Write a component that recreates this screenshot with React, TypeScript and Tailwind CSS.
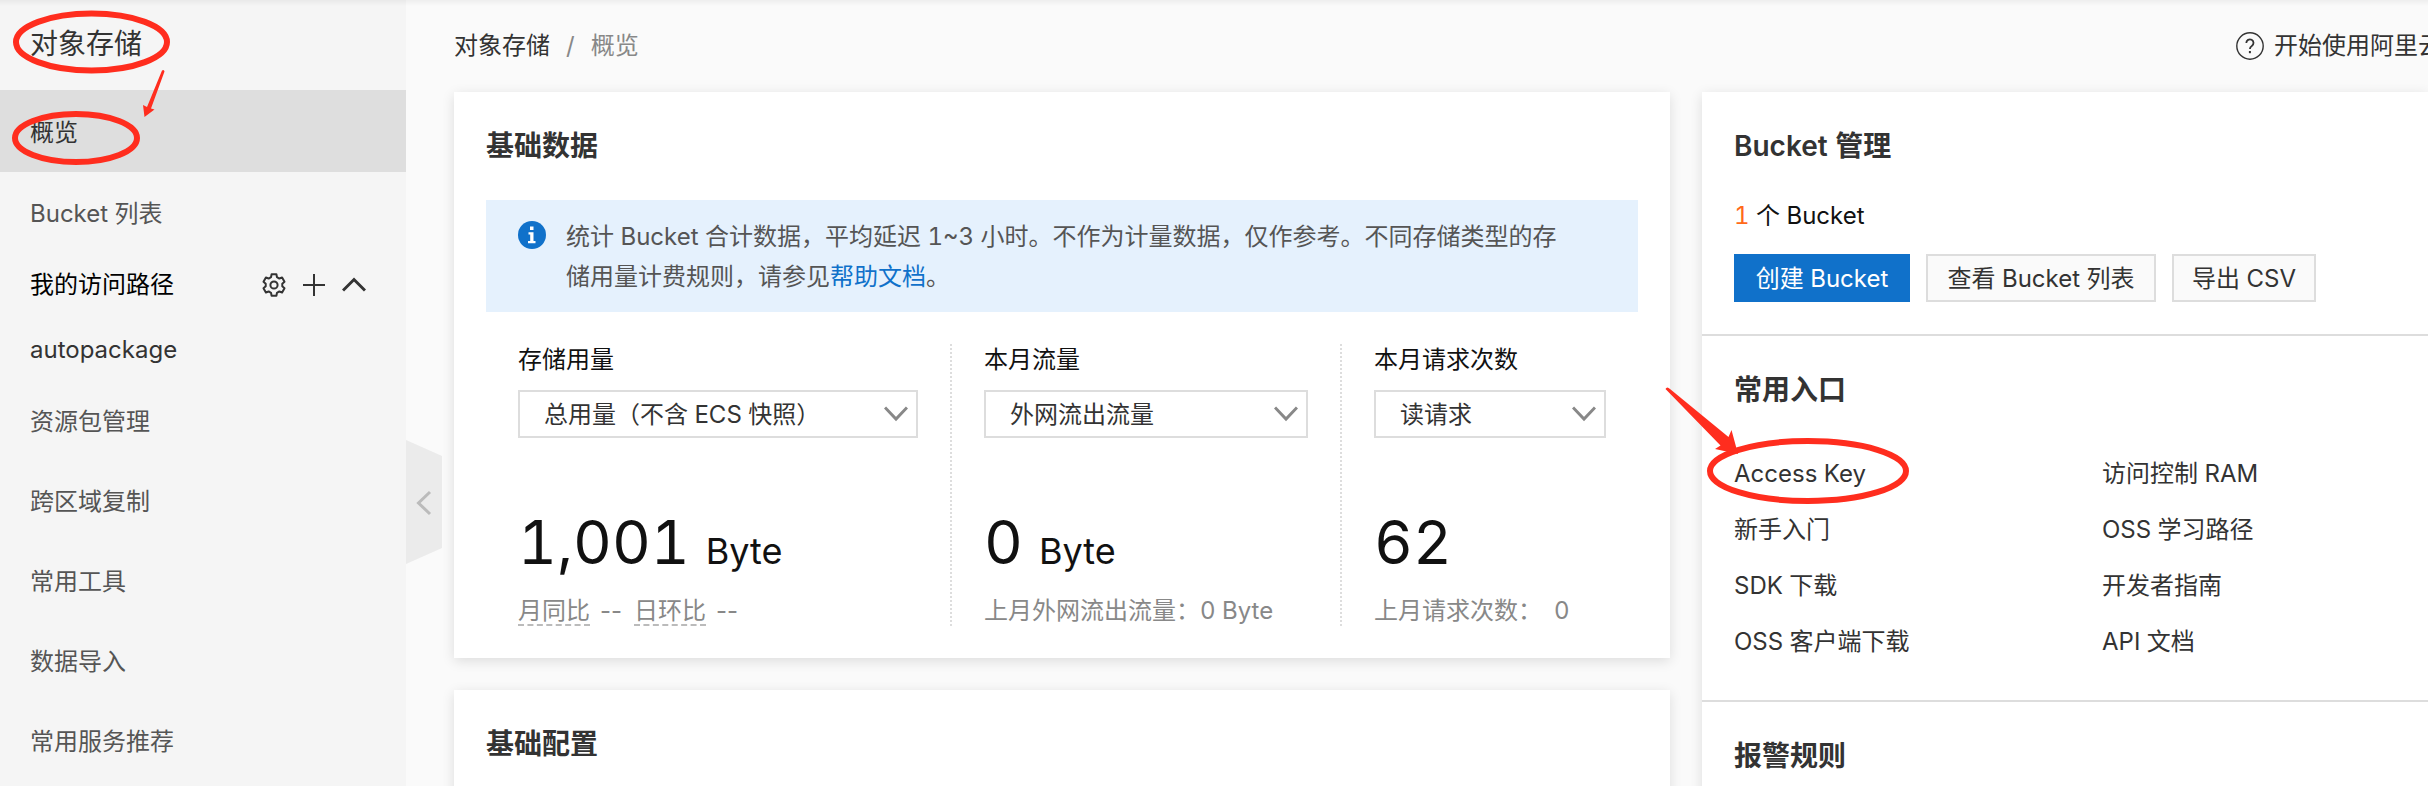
import { useState } from "react";
import type { ReactNode } from "react";

const RED = "#ff2d1e";

function GearIcon() {
  const points: string[] = [];
  const teeth = 6;
  for (let i = 0; i < teeth; i++) {
    const base = (i * 2 * Math.PI) / teeth - Math.PI / 2;
    const corners: [number, number][] = [
      [-0.36, 8.4],
      [-0.22, 11],
      [0.22, 11],
      [0.36, 8.4],
    ];
    corners.forEach(([a, r]) => {
      points.push(`${(12 + r * Math.cos(base + a)).toFixed(2)},${(12 + r * Math.sin(base + a)).toFixed(2)}`);
    });
  }
  return (
    <svg viewBox="0 0 24 24" className="size-6" fill="none" stroke="#333" strokeWidth="2" strokeLinejoin="round">
      <polygon points={points.join(" ")} />
      <circle cx="12" cy="12" r="3.6" />
    </svg>
  );
}

function PlusIcon() {
  return (
    <svg viewBox="0 0 24 24" className="size-6" fill="none" stroke="#333" strokeWidth="2">
      <path d="M12 1v22M1 12h22" />
    </svg>
  );
}

function UpIcon() {
  return (
    <svg viewBox="0 0 24 24" className="size-6" fill="none" stroke="#333" strokeWidth="3">
      <path d="M1 17.5 12 6.500 23 17.500" />
    </svg>
  );
}

function DownIcon() {
  return (
    <svg
      viewBox="0 0 24 16"
      className="pointer-events-none absolute top-4 right-2.5 h-4 w-6"
      fill="none"
      stroke="#888"
      strokeWidth="3"
    >
      <path d="M1 1.500 12 13 23 1.500" />
    </svg>
  );
}

function InfoIcon() {
  return (
    <svg viewBox="0 0 28 28" className="mt-1 size-7 shrink-0">
      <circle cx="14" cy="14" r="14" fill="#1071ca" />
      <path d="M12 5.500h3.500v3.500h-3.500zM10.500 11.200h5v8.800h2v2.300h-7.500v-2.300h2.200v-6.500h-1.700z" fill="#fff" />
    </svg>
  );
}

function HelpIcon() {
  return (
    <svg viewBox="0 0 28 28" className="size-7 shrink-0" fill="none" stroke="#333" strokeWidth="1.4">
      <circle cx="14" cy="14" r="13.200" />
      <path d="M10.300 11a3.600 3.600 0 1 1 5.500 3c-1.300.8-1.900 1.500-1.900 3.100" strokeWidth="1.8" />
      <path d="M13.900 19v2.200" strokeWidth="2" />
    </svg>
  );
}

function SideItem({ label }: { label: string }) {
  return (
    <a href="#" className="flex h-20 items-center px-[30px] text-[#555]">
      {label}
    </a>
  );
}

function Card({ children, className = "" }: { children: ReactNode; className?: string }) {
  return <section className={`bg-white shadow-[0_3px_12px_rgba(0,0,0,0.12)] ${className}`}>{children}</section>;
}

function Title({ children }: { children: ReactNode }) {
  return <h2 className="pt-0.5 text-[28px] leading-10 font-semibold text-[#333]">{children}</h2>;
}

function Metric({
  id,
  label,
  option,
  value,
  unit,
  children,
}: {
  id: string;
  label: string;
  option: string;
  value: string;
  unit?: string;
  children: ReactNode;
}) {
  return (
    <div className="min-w-0 border-r-2 border-dotted border-[#ddd] px-8 last:border-r-0">
      <label htmlFor={id} className="block leading-8 text-[#111]">
        {label}
      </label>
      <div className="relative mt-3.5">
        <select
          id={id}
          className="block h-12 w-full appearance-none rounded-none border-2 border-[#ddd] bg-white pt-0.5 pr-10 pl-6 text-[#333]"
        >
          <option>{option}</option>
        </select>
        <DownIcon />
      </div>
      <p className="mt-[68px] text-[60px] leading-[72px] whitespace-nowrap text-[#111]">
        {value}
        {unit && <span className="ml-4 text-4xl">{unit}</span>}
      </p>
      <div className="mt-[18px] flex h-[30px] leading-[30px] whitespace-nowrap text-[#888]">{children}</div>
    </div>
  );
}

const links = [
  "Access Key",
  "访问控制 RAM",
  "新手入门",
  "OSS 学习路径",
  "SDK 下载",
  "开发者指南",
  "OSS 客户端下载",
  "API 文档",
];

export default function App() {
  const [open, setOpen] = useState(true);
  return (
    <div className="relative flex h-screen overflow-hidden bg-[#fafafa] font-['Inter','Noto_Sans_CJK_SC',sans-serif] text-2xl text-[#333] tabular-nums">
      <aside className="relative w-[406px] shrink-0 bg-[#f5f5f5]">
        <h1 className="flex h-[90px] items-center px-[30px] text-[28px]">对象存储</h1>
        <nav>
          <a href="#" aria-current="page" className="flex h-[82px] items-center bg-[#dedede] px-[30px] pt-1 text-[#333]">
            概览
          </a>
          <a href="#" className="flex h-20 items-center px-[30px] pt-1 text-[#555]">
            Bucket 列表
          </a>
          <div className="flex h-[66px] items-center pr-10 pl-[30px]">
            <span className="flex-1 text-black">我的访问路径</span>
            <div className="flex gap-4">
              <button aria-label="设置">
                <GearIcon />
              </button>
              <button aria-label="添加">
                <PlusIcon />
              </button>
              <button aria-label="收起" onClick={() => setOpen(!open)}>
                <UpIcon />
              </button>
            </div>
          </div>
          {open && (
            <a href="#" className="flex h-16 items-center px-[30px]">
              autopackage
            </a>
          )}
          <SideItem label="资源包管理" />
          <SideItem label="跨区域复制" />
          <SideItem label="常用工具" />
          <SideItem label="数据导入" />
          <SideItem label="常用服务推荐" />
        </nav>
        <button aria-label="折叠菜单" className="absolute top-[440px] left-full h-[124px] w-9">
          <svg viewBox="0 0 36 124" className="h-full w-full" fill="none">
            <path d="M0 0 36 16V108L0 124Z" fill="#ebebeb" />
            <path d="M24 52 12.500 63 24 74" stroke="#bbb" strokeWidth="3" />
          </svg>
        </button>
        <svg viewBox="0 0 200 180" className="pointer-events-none absolute top-0 left-0 h-[180px] w-[200px]" fill="none">
          <ellipse cx="91.500" cy="42" rx="75.500" ry="28.500" stroke={RED} strokeWidth="6" />
          <ellipse cx="76" cy="138" rx="61" ry="24" stroke={RED} strokeWidth="6" />
          <path d="M162 70.500Q164 69 164.500 71.500L151 108.500 154.500 109.500 144.500 117 143 105 147 107Z" fill={RED} />
        </svg>
      </aside>

      <main className="min-w-0 flex-1 pl-12">
        <header className="flex h-[92px] items-center justify-between">
          <nav className="flex gap-4">
            <a href="#">对象存储</a>
            <span className="text-[#888]">/</span>
            <span className="text-[#888]">概览</span>
          </nav>
          <a href="#" className="flex w-48 items-center gap-2.5 overflow-hidden whitespace-nowrap">
            <HelpIcon />
            开始使用阿里云 OSS
          </a>
        </header>

        <div className="grid grid-cols-[1216fr_726fr] gap-x-8">
          <div className="flex min-w-0 flex-col gap-8">
            <Card className="px-8 pt-8 pb-8">
              <Title>基础数据</Title>
              <div className="mt-[34px] flex gap-5 bg-[#e5f1fd] pt-[17px] pr-17 pb-[15px] pl-8">
                <InfoIcon />
                <p className="leading-10 text-[#555]">
                  统计 Bucket 合计数据，平均延迟 1~3 小时。不作为计量数据，仅作参考。不同存储类型的存储用量计费规则，请参见
                  <a href="#" className="text-[#1071ca]">
                    帮助文档
                  </a>
                  。
                </p>
              </div>
              <div className="mt-8 grid grid-cols-[466fr_390fr_296fr]">
                <Metric id="storage" label="存储用量" option="总用量（不含 ECS 快照）" value="1,001" unit="Byte">
                  <span className="border-b-2 border-dashed border-[#bbb]">月同比</span>
                  <span className="mr-3 ml-2.5 normal-nums">--</span>
                  <span className="border-b-2 border-dashed border-[#bbb]">日环比</span>
                  <span className="ml-2.5 normal-nums">--</span>
                </Metric>
                <Metric id="traffic" label="本月流量" option="外网流出流量" value="0" unit="Byte">
                  上月外网流出流量：0 Byte
                </Metric>
                <Metric id="requests" label="本月请求次数" option="读请求" value="62">
                  上月请求次数：<span className="ml-3">0</span>
                </Metric>
              </div>
            </Card>
            <Card className="h-80 px-8 pt-8">
              <Title>基础配置</Title>
            </Card>
          </div>

          <Card className="min-w-0">
            <div className="border-b-2 border-[#ddd] px-8 pt-8 pb-8">
              <Title>Bucket 管理</Title>
              <p className="mt-8 leading-9 text-[#111]">
                <span className="text-[#ff6a19]">1</span> 个 Bucket
              </p>
              <div className="mt-5 flex gap-4 whitespace-nowrap">
                <button className="h-12 w-44 bg-[#1071ca] pt-0.5 text-white">创建 Bucket</button>
                <button className="h-12 w-[230px] border-2 border-[#ddd] bg-[#fafafa] pt-0.5">查看 Bucket 列表</button>
                <button className="h-12 w-36 border-2 border-[#ddd] bg-[#fafafa] pt-0.5">导出 CSV</button>
              </div>
            </div>
            <div className="border-b-2 border-[#ddd] pt-8 pb-[30px] pl-8">
              <Title>常用入口</Title>
              <ul className="mt-9 grid grid-cols-[368fr_326fr]">
                {links.map((text, i) => (
                  <li key={text} className="relative flex h-14 items-center">
                    <a href="#">{text}</a>
                    {i === 0 && (
                      <svg
                        viewBox="0 0 260 130"
                        className="pointer-events-none absolute -top-[61px] -left-[74px] h-[130px] w-[260px]"
                        fill="none"
                      >
                        <ellipse cx="148" cy="86" rx="98" ry="30" stroke={RED} strokeWidth="6" />
                        <path d="M5.500 4Q7 1 10 4L68.500 52 71.500 45 78 69 55 64 60.500 60.500Z" fill={RED} />
                      </svg>
                    )}
                  </li>
                ))}
              </ul>
            </div>
            <div className="px-8 pt-8">
              <Title>报警规则</Title>
            </div>
          </Card>
        </div>
      </main>
      <div className="pointer-events-none absolute inset-x-0 top-0 h-1.5 bg-linear-to-b from-black/5 to-transparent" />
    </div>
  );
}
